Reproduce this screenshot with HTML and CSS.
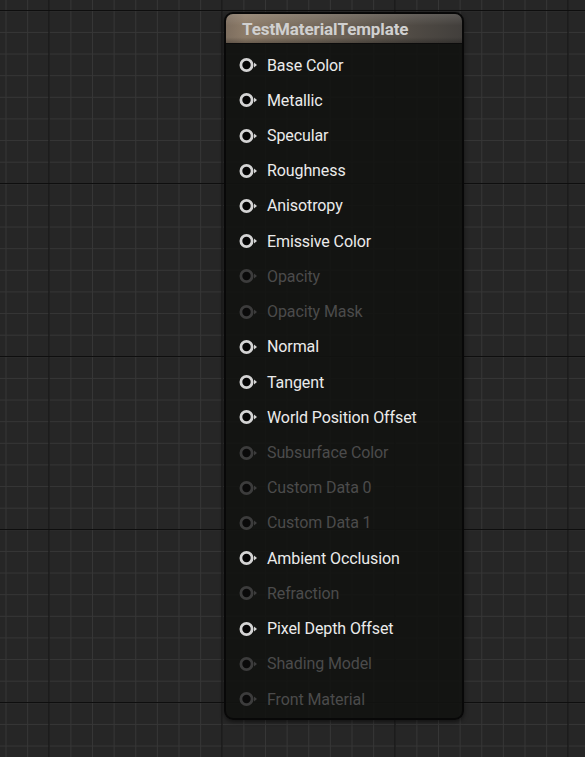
FILE: index.html
```html
<!DOCTYPE html>
<html>
<head>
<meta charset="utf-8">
<link rel="stylesheet" href="styles.css">
</head>
<body>
<div class="canvas">
  <div class="node">
    <div class="node-header">TestMaterialTemplate</div>
    <div class="pins">
      <div class="pin"><svg class="pin-icon" viewBox="0 0 22 16"><circle cx="7.5" cy="8" r="5.6"/><path d="M15 5.6 L18 8 L15 10.4 Z"/></svg><span>Base Color</span></div>
      <div class="pin"><svg class="pin-icon" viewBox="0 0 22 16"><circle cx="7.5" cy="8" r="5.6"/><path d="M15 5.6 L18 8 L15 10.4 Z"/></svg><span>Metallic</span></div>
      <div class="pin"><svg class="pin-icon" viewBox="0 0 22 16"><circle cx="7.5" cy="8" r="5.6"/><path d="M15 5.6 L18 8 L15 10.4 Z"/></svg><span>Specular</span></div>
      <div class="pin"><svg class="pin-icon" viewBox="0 0 22 16"><circle cx="7.5" cy="8" r="5.6"/><path d="M15 5.6 L18 8 L15 10.4 Z"/></svg><span>Roughness</span></div>
      <div class="pin"><svg class="pin-icon" viewBox="0 0 22 16"><circle cx="7.5" cy="8" r="5.6"/><path d="M15 5.6 L18 8 L15 10.4 Z"/></svg><span>Anisotropy</span></div>
      <div class="pin"><svg class="pin-icon" viewBox="0 0 22 16"><circle cx="7.5" cy="8" r="5.6"/><path d="M15 5.6 L18 8 L15 10.4 Z"/></svg><span>Emissive Color</span></div>
      <div class="pin off"><svg class="pin-icon" viewBox="0 0 22 16"><circle cx="7.5" cy="8" r="5.6"/><path d="M15 5.6 L18 8 L15 10.4 Z"/></svg><span>Opacity</span></div>
      <div class="pin off"><svg class="pin-icon" viewBox="0 0 22 16"><circle cx="7.5" cy="8" r="5.6"/><path d="M15 5.6 L18 8 L15 10.4 Z"/></svg><span>Opacity Mask</span></div>
      <div class="pin"><svg class="pin-icon" viewBox="0 0 22 16"><circle cx="7.5" cy="8" r="5.6"/><path d="M15 5.6 L18 8 L15 10.4 Z"/></svg><span>Normal</span></div>
      <div class="pin"><svg class="pin-icon" viewBox="0 0 22 16"><circle cx="7.5" cy="8" r="5.6"/><path d="M15 5.6 L18 8 L15 10.4 Z"/></svg><span>Tangent</span></div>
      <div class="pin"><svg class="pin-icon" viewBox="0 0 22 16"><circle cx="7.5" cy="8" r="5.6"/><path d="M15 5.6 L18 8 L15 10.4 Z"/></svg><span>World Position Offset</span></div>
      <div class="pin off"><svg class="pin-icon" viewBox="0 0 22 16"><circle cx="7.5" cy="8" r="5.6"/><path d="M15 5.6 L18 8 L15 10.4 Z"/></svg><span>Subsurface Color</span></div>
      <div class="pin off"><svg class="pin-icon" viewBox="0 0 22 16"><circle cx="7.5" cy="8" r="5.6"/><path d="M15 5.6 L18 8 L15 10.4 Z"/></svg><span>Custom Data 0</span></div>
      <div class="pin off"><svg class="pin-icon" viewBox="0 0 22 16"><circle cx="7.5" cy="8" r="5.6"/><path d="M15 5.6 L18 8 L15 10.4 Z"/></svg><span>Custom Data 1</span></div>
      <div class="pin"><svg class="pin-icon" viewBox="0 0 22 16"><circle cx="7.5" cy="8" r="5.6"/><path d="M15 5.6 L18 8 L15 10.4 Z"/></svg><span>Ambient Occlusion</span></div>
      <div class="pin off"><svg class="pin-icon" viewBox="0 0 22 16"><circle cx="7.5" cy="8" r="5.6"/><path d="M15 5.6 L18 8 L15 10.4 Z"/></svg><span>Refraction</span></div>
      <div class="pin"><svg class="pin-icon" viewBox="0 0 22 16"><circle cx="7.5" cy="8" r="5.6"/><path d="M15 5.6 L18 8 L15 10.4 Z"/></svg><span>Pixel Depth Offset</span></div>
      <div class="pin off"><svg class="pin-icon" viewBox="0 0 22 16"><circle cx="7.5" cy="8" r="5.6"/><path d="M15 5.6 L18 8 L15 10.4 Z"/></svg><span>Shading Model</span></div>
      <div class="pin off"><svg class="pin-icon" viewBox="0 0 22 16"><circle cx="7.5" cy="8" r="5.6"/><path d="M15 5.6 L18 8 L15 10.4 Z"/></svg><span>Front Material</span></div>
    </div>
  </div>
</div>
</body>
</html>
```

FILE: styles.css
```css
html, body {
  margin: 0;
  padding: 0;
  width: 585px;
  height: 757px;
  overflow: hidden;
}
body {
  font-family: Roboto, "Liberation Sans", sans-serif;
  background-color: #262626;
}
.canvas {
  position: relative;
  width: 585px;
  height: 757px;
  background-color: #262626;
  background-image:
    linear-gradient(to right, #0e0e0e 0, #0e0e0e 1.5px, transparent 1.5px),
    linear-gradient(to bottom, #0e0e0e 0, #0e0e0e 1.5px, transparent 1.5px),
    linear-gradient(to right, #363636 0, #363636 1px, transparent 1px),
    linear-gradient(to bottom, #363636 0, #363636 1px, transparent 1px);
  background-size: 173px 173px, 173px 173px, 21.625px 21.625px, 21.625px 21.625px;
  background-position: 48.5px 0, 0 10px, 5.5px 0, 0 10.3px;
}
.node {
  position: absolute;
  left: 224px;
  top: 12px;
  width: 236px;
  height: 704px;
  border: 2px solid #080808;
  border-radius: 9px;
  background: rgba(18, 19, 17, 0.9);
  box-shadow: 0 2px 4px rgba(0,0,0,0.5);
  display: flex;
  flex-direction: column;
  overflow: hidden;
}
.node-header {
  height: 29px;
  flex: none;
  display: flex;
  align-items: center;
  padding-left: 16px;
  font-size: 17px;
  font-weight: 700;
  letter-spacing: -0.1px;
  color: #d0d0d0;
  background:
    linear-gradient(to bottom, rgba(255,255,255,0.12) 0, rgba(255,255,255,0) 40%, rgba(0,0,0,0) 80%, rgba(0,0,0,0.25) 100%),
    linear-gradient(to right, #7d6e5f 0%, #8d7c69 8%, #73685b 40%, #4f4a44 80%, #423f3c 100%);
  border-bottom: 1px solid #0c0c0c;
}
.pins {
  display: flex;
  flex-direction: column;
  padding-top: 3.5px;
}
.pin {
  height: 35.22px;
  display: flex;
  align-items: center;
  padding-left: 13px;
  font-size: 16px;
  letter-spacing: -0.1px;
  color: #ebebeb;
}
.pin-icon {
  width: 22px;
  height: 16px;
  margin-right: 6px;
  flex: none;
}
.pin-icon circle {
  fill: #050505;
  stroke: #d4d4d4;
  stroke-width: 2.8;
}
.pin-icon path {
  fill: #d4d4d4;
}
.pin.off {
  color: #4b4b4b;
}
.pin.off .pin-icon circle {
  stroke: #3c3c3c;
  fill: #0a0a0a;
}
.pin.off .pin-icon path {
  fill: #3c3c3c;
}
```
